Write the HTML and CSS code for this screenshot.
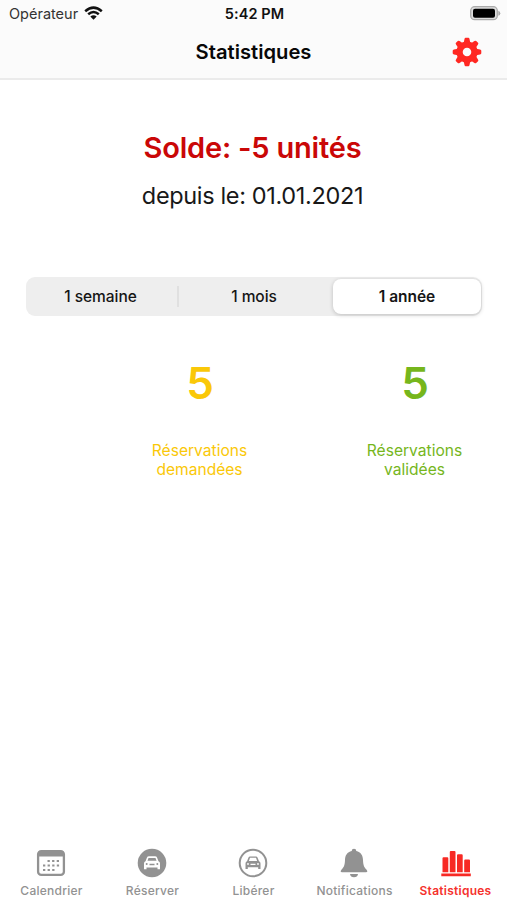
FILE: index.html
```html
<!DOCTYPE html>
<html lang="fr">
<head>
<meta charset="utf-8">
<title>Statistiques</title>
<link rel="stylesheet" href="styles.css">
</head>
<body>
<div class="app">
  <header class="header">
    <div class="status">
      <div class="carrier"><span>Opérateur</span>
        <svg class="wifi" width="19" height="14" viewBox="0 0 19 14"><g fill="none" stroke="#111" stroke-width="2.5"><path d="M1.2 5.2Q9.500-2 17.800 5.200"/><path d="M4.200 8.300Q9.500 3.700 14.800 8.300"/></g><path d="M6.300 10.600Q9.500 8 12.700 10.600L9.500 13.800Z" fill="#111"/></svg>
      </div>
      <time class="clock">5:42 PM</time>
      <svg class="battery" width="31" height="15" viewBox="0 0 31 15"><rect x=".7" y=".7" width="26.600" height="13" rx="4" fill="#ddd" stroke="#aaa" stroke-width="1.300"/><rect x="3" y="2.700" width="22" height="9" rx="2" fill="#000"/><path d="M28.300 4.700Q30.300 5.200 30.300 7.200T28.300 9.700Z" fill="#aaa"/></svg>
    </div>
    <div class="navbar">
      <h1 class="title">Statistiques</h1>
      <svg class="gear" width="30" height="30" viewBox="-15 -15 30 30" fill="#ff2822"><defs><path id="tooth" d="M-4.300-8.500Q-2.700-10.200-2.500-13Q-2.300-14.300-1.300-14.300H1.300Q2.300-14.300 2.500-13Q2.700-10.200 4.300-8.500Z"/></defs><path fill-rule="evenodd" d="M-10.500 0A10.500 10.500 0 1 0 10.500 0A10.500 10.500 0 1 0-10.500 0ZM-4.300 0A4.300 4.300 0 1 1 4.300 0A4.300 4.300 0 1 1-4.300 0Z"/><use href="#tooth"/><use href="#tooth" transform="rotate(45)"/><use href="#tooth" transform="rotate(90)"/><use href="#tooth" transform="rotate(135)"/><use href="#tooth" transform="rotate(180)"/><use href="#tooth" transform="rotate(225)"/><use href="#tooth" transform="rotate(270)"/><use href="#tooth" transform="rotate(315)"/></svg>
    </div>
  </header>

  <main class="content">
    <h2 class="balance">Solde: -5 unités</h2>
    <p class="since">depuis le: 01.01.2021</p>
    <div class="segments">
      <button class="segment">1 semaine</button>
      <button class="segment divided">1 mois</button>
      <button class="segment selected">1 année</button>
    </div>
    <div class="stats">
      <section class="stat requested"><strong class="value">5</strong><p class="label">Réservations<br>demandées</p></section>
      <section class="stat approved"><strong class="value">5</strong><p class="label">Réservations<br>validées</p></section>
    </div>
  </main>

  <nav class="tabs">
    <a class="tab">
      <svg width="30" height="30" viewBox="0 0 30 30"><rect x="2.100" y="3.100" width="25.800" height="23.800" rx="3.200" fill="none" stroke="#929292" stroke-width="2.300"/><path d="M2 8.500V5.500Q2 3 4.500 3H25.500Q28 3 28 5.500V8.500Z" fill="#929292"/><g fill="none" stroke="#929292" stroke-width="2.200" stroke-dasharray="2.300 2.300"><path d="M11.500 13H24"/><path d="M7 17.500H25"/><path d="M7 22H19"/></g></svg>
      <span class="tab-label">Calendrier</span>
    </a>
    <a class="tab">
      <svg width="30" height="30" viewBox="0 0 30 30"><circle cx="15" cy="15" r="14.300" fill="#929292"/><path d="M7 21.200V15.500Q7 13.700 8.500 13.200L10 9.500Q10.400 8.200 12 8.200H18Q19.600 8.200 20 9.500L21.500 13.200Q23 13.700 23 15.500V21.200H20.500V19.500H9.500V21.200Z" fill="#fff"/><path d="M10.500 12.800L11.500 10H18.500L19.500 12.800ZM12.500 15.700H17.500V17.300H12.500Z" fill="#929292"/><circle cx="9.700" cy="16" r="1" fill="#929292"/><circle cx="20.300" cy="16" r="1" fill="#929292"/></svg>
      <span class="tab-label">Réserver</span>
    </a>
    <a class="tab">
      <svg width="30" height="30" viewBox="0 0 30 30"><circle cx="15" cy="15" r="13.300" fill="none" stroke="#929292" stroke-width="2"/><path d="M7.500 20.900V15.500Q7.500 13.700 9 13.200L10.500 9.500Q10.900 8.400 12 8.400H18Q19.100 8.400 19.500 9.500L21 13.200Q22.500 13.700 22.500 15.500V20.900H20.200V19.300H9.800V20.900Z" fill="#929292"/><path d="M10.900 12.900L12 9.700H18L19.100 12.900ZM12.500 15.700H17.500V17H12.500Z" fill="#fff"/><circle cx="10" cy="16" r=".9" fill="#fff"/><circle cx="20" cy="16" r=".9" fill="#fff"/></svg>
      <span class="tab-label">Libérer</span>
    </a>
    <a class="tab">
      <svg width="30" height="30" viewBox="0 0 30 30" fill="#929292"><path d="M12.700 3Q12.700.8 15 .8T17.300 3C21.800 4.100 23.900 7.300 24 12C24.200 17.500 25.200 19.300 27.400 21.500Q29.500 24.300 27 24.300H3Q.5 24.300 2.600 21.500C4.800 19.300 5.800 17.500 6 12C6.100 7.300 8.200 4.100 12.700 3ZM11 26H19Q18.500 29.200 15 29.200T11 26Z"/></svg>
      <span class="tab-label">Notifications</span>
    </a>
    <a class="tab active">
      <svg width="30" height="30" viewBox="0 0 30 30" fill="#f72924"><path d="M1.500 10.300Q1.500 9.300 2.500 9.300H6.300Q7.300 9.300 7.300 10.300V24.300H1.500ZM8.800 4Q8.800 3 9.800 3H13.500Q14.500 3 14.500 4V24.300H8.800ZM16 7.300Q16 6.300 17 6.300H20.700Q21.700 6.300 21.700 7.300V24.300H16ZM23.200 12.500Q23.200 11.500 24.200 11.500H28Q29 11.500 29 12.500V24.300H23.200ZM.3 25.500H29.800V28.300H.3Z"/></svg>
      <span class="tab-label">Statistiques</span>
    </a>
  </nav>
</div>
</body>
</html>
```
FILE: styles.css
```css
* { box-sizing: border-box; }
body { margin: 0; background: #fff; color: #111; font-family: Inter, "Liberation Sans", sans-serif; }
h1, h2, p { margin: 0; }
svg { display: block; flex: none; }
.app { width: 507px; height: 900px; display: flex; flex-direction: column; overflow: hidden; }
.header { height: 80px; background: #fbfbfb; border-bottom: 2px solid #ebebeb; }
.status { height: 27px; display: grid; grid-template-columns: 1fr 60px 1fr; align-items: center; padding: 0 6px 0 8px; }
.carrier { display: flex; align-items: center; gap: 6px; padding-left: 1px; font-size: 14.500px; color: #333; }
.wifi { margin-top: -1px; }
.clock { font-size: 14.500px; font-weight: 600; letter-spacing: .1px; white-space: nowrap; text-align: center; }
.battery { justify-self: end; }
.navbar { height: 49px; display: grid; grid-template-columns: 1fr 120px 1fr; align-items: center; padding: 0 25px; }
.title { grid-column: 2; font-size: 20.200px; line-height: 26px; font-weight: 600; text-align: center; white-space: nowrap; color: #080808; }
.gear { justify-self: end; }
.content { flex: 1; padding: 50px 25px 0 26px; }
.balance { height: 36px; line-height: 36px; margin-left: -3px; font-size: 29px; font-weight: 600; color: #ca0707; text-align: center; letter-spacing: -.2px; }
.since { height: 36px; margin: 12px 0 0 -3px; line-height: 36px; font-size: 23.500px; text-align: center; color: #181818; letter-spacing: -.35px; }
.segments { height: 39px; margin-top: 63px; display: grid; grid-template-columns: 151px 154px 151px; background: #eee; border-radius: 9px; }
.segment { padding: 0 2px 0 0; border: 0; background: none; font: 500 15.500px/39px Inter, sans-serif; letter-spacing: -.05px; color: #151515; }
.divided { padding: 0; background: linear-gradient(#e0e0e0, #e0e0e0) left center / 2px 21px no-repeat; }
.selected { margin: 2px 1px 2px 2px; padding-right: 0; border-radius: 8px; background: #fff; font-weight: 600; line-height: 35px; box-shadow: 0 1px 4px #0003; }
.stats { margin-top: 42px; padding-left: 66px; display: grid; grid-template-columns: 215px 215px; }
.stat { display: flex; flex-direction: column; align-items: center; text-align: center; }
.value { height: 50px; line-height: 50px; padding-left: 1px; font-size: 44px; font-weight: 600; }
.label { margin-top: 33px; font-size: 15.600px; line-height: 19px; white-space: nowrap; }
.requested { color: #fac808; }
.approved { color: #76b61c; }
.tabs { height: 60px; display: grid; grid-template-columns: repeat(5, 101px); padding-left: 1px; }
.tab { display: flex; flex-direction: column; align-items: center; padding-top: 8px; }
.tab svg { margin-left: -1px; }
.tab.active svg { margin-left: 1px; }
.tab-label { margin-top: 5px; font-size: 12px; font-weight: 500; line-height: 15px; letter-spacing: .25px; color: #929292; white-space: nowrap; }
.active .tab-label { color: #f5312d; font-weight: 600; }
```
